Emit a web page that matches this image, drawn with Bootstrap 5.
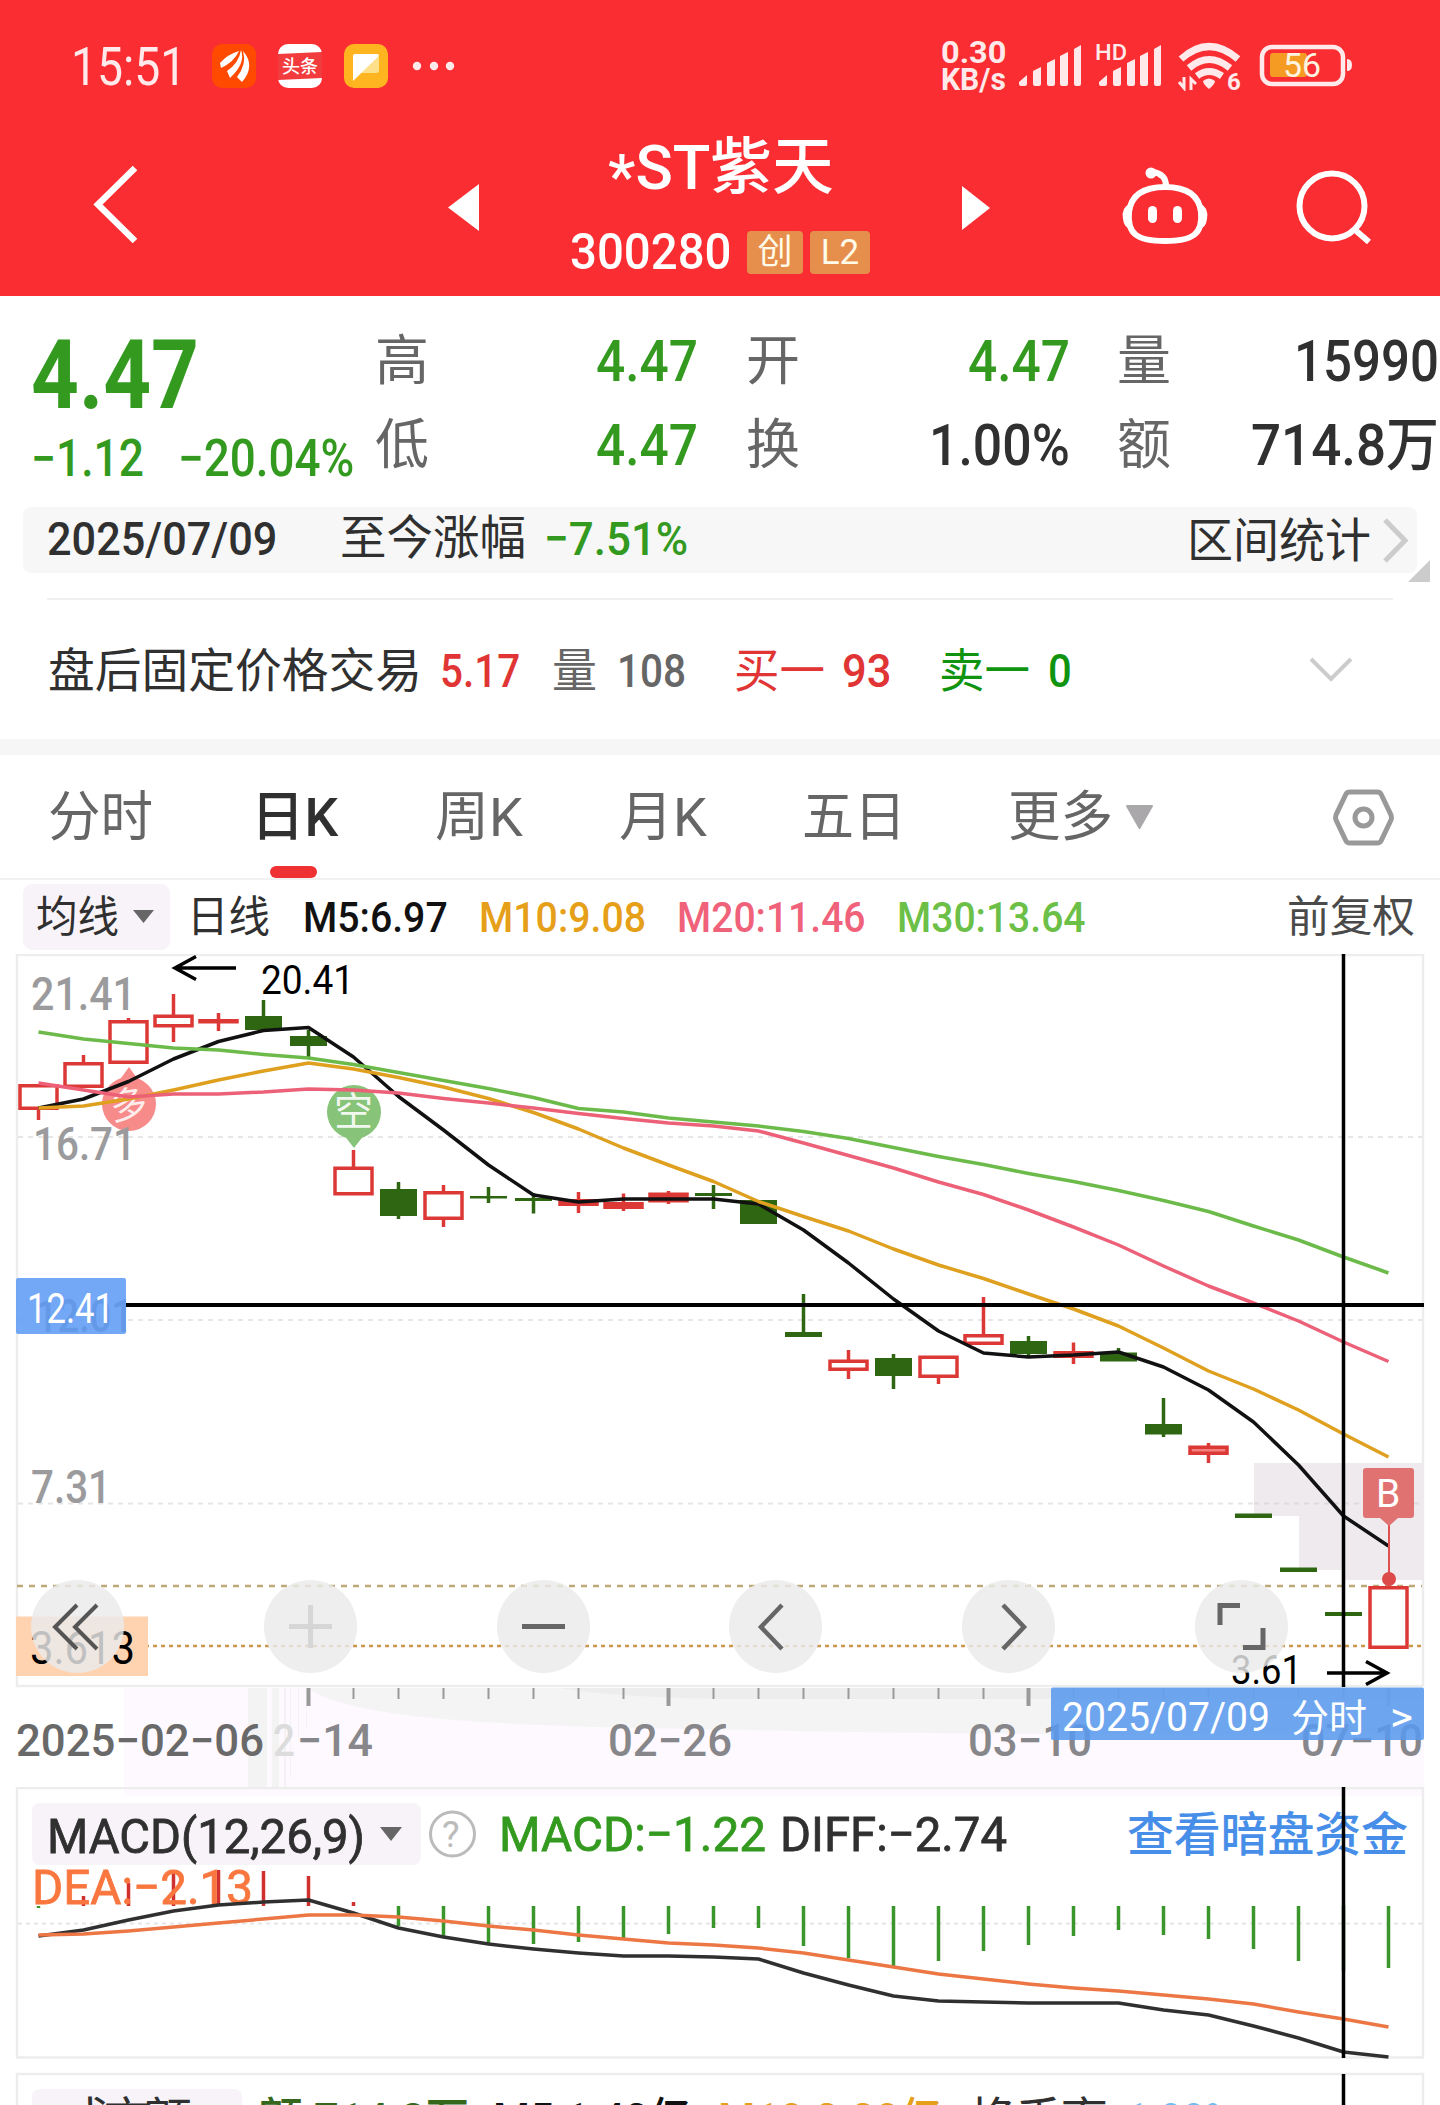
<!DOCTYPE html>
<html lang="zh-CN">
<head>
<meta charset="utf-8">
<meta name="viewport" content="width=device-width, initial-scale=1">
<title>*ST紫天 300280</title>
<link href="https://cdn.jsdelivr.net/npm/bootstrap@5.3.0/dist/css/bootstrap.min.css" rel="stylesheet">
<style>
body{font-family:Roboto,"Noto Sans CJK SC",sans-serif;background:#fff;color:#303030;width:1440px;overflow-x:hidden}
.app{height:2105px;overflow:hidden}
.fit{display:block;flex:none;white-space:nowrap}
.fit>span{display:inline-block;transform-origin:0 50%}
svg{display:block;flex:none}
.up{color:#e03534}.dn{color:#339a1f}.soft{color:#666}
.m5{font-weight:500}
/* header */
.top{height:296px;background:#f92d32;color:#fff}
.status{height:132px;color:#ffe9ea;padding-left:71px}
.clock{width:115px;font-size:54px}
.rate{line-height:27px;font-size:31px;font-weight:700;margin-left:461px}
.rate .fit{width:65px}
.navrow{height:164px}
.ttlbox{width:226px;flex:none}
.ttl{width:226px;height:72px;font-size:62px;line-height:72px}
.star{vertical-align:-9px;font-weight:500}
.codeline{height:88px;margin:4px 0 0 -38px}
.code{width:162px;font-size:50px;font-weight:500}
.tagbox{background:#e68f4c;border-radius:4px;height:43px;width:56px;flex:none;font-size:35px;line-height:43px;text-align:center;color:#fffbe8;margin-left:15px}
.tagbox.l2{width:60px;margin-left:7px}
/* quote */
.quote{height:211px}
.main-q{width:375px;padding:29px 0 0 31px}
.big{width:168px;font-size:96px;line-height:100px;font-weight:700}
.chg{font-size:51px;line-height:67px;font-weight:500}
.chg .a{width:113px}.chg .b{width:176px;margin-left:34px}
.cells{padding-top:23px;line-height:84px;font-size:58px}
.cell1,.cell2{width:323px;margin-right:48px}.cell2{width:324px;margin-right:47px}.cell3{width:322px}
.lab{font-size:54px;line-height:86px;height:84px;width:54px}
.v1{width:102px}.v2{width:141px}.v3{width:145px}.v4{width:188px}
.range{margin:0 23px;height:66px;border-radius:8px;background:#f7f7f7;line-height:63px;font-size:47px;padding-left:24px}
.hr1{margin:25px 47px 0;height:2px;background:#f0f0f0}
.after{height:139px;line-height:141px;padding-left:48px;font-size:47px}
.band{height:16px;background:#f6f6f6}
/* tabs */
.tabs{height:125px;border-bottom:2px solid #f1f1f1;padding-left:48px;font-size:54px;line-height:126px;color:#666}
.tabs .fit{height:123px}
.tabs .on{color:#303030;margin-left:98px}
.tabs .on::after{content:"";display:block;position:absolute;left:19px;bottom:0;width:47px;height:12px;border-radius:6px;background:#ef3133}
.ma{height:74px;padding-left:23px;line-height:67px;font-size:43px}
.pill{background:#f7f3f8;border-radius:9px;color:#303030}
.ctl{left:31px;top:626px;width:1257px}
.ctl .btn{width:93px;height:93px;background:rgba(234,234,234,.82);border:0}
.pane{width:1440px}
</style>
</head>
<body>
<div class="app">
<header class="top">
  <div class="status d-flex align-items-center">
    <span class="fit clock">15:51</span>
    <svg class="ms-4" width="270" height="44" viewBox="0 0 270 44">
      <rect x="2" width="44" height="44" rx="10" fill="#ff4a00"/>
      <path d="M10 19Q18 10 29 7Q24 18 11 24ZM17 27Q29 19 31 6Q36 19 20 34ZM27 33Q37 20 33 7Q46 22 32 38Z" fill="#fff"/>
      <rect x="68" width="44" height="44" rx="10" fill="#fff"/><path d="M68 10l44-2v26l-44 2Z" fill="#f23b3c"/>
      <text x="72" y="29" font-size="18" font-weight="500" fill="#fff" textLength="36">头条</text>
      <rect x="134" width="44" height="44" rx="10" fill="#ffb51f"/><path d="M151 29h15q3 0 3-3V12Z" fill="#ffe08a"/><path d="M143 37V12q0-2 2-2h22q3 0 1 3Z" fill="#fff"/>
      <circle cx="207" cy="22" r="4.2" fill="#ffe9ea"/><circle cx="224" cy="22" r="4.2" fill="#ffe9ea"/><circle cx="240" cy="22" r="4.2" fill="#ffe9ea"/>
    </svg>
    <div class="rate"><span class="fit">0.30</span><span class="fit">KB/s</span></div>
    <svg width="345" height="50" viewBox="1014 42 345 50" class="ms-2" fill="#ffe9ea">
      <path d="M1019 83l8-7v9q0 2-2 2h-4q-2 0-2-2ZM1033 72l8-4v17q0 2-2 2h-4q-2 0-2-2ZM1047 64l8-4v25q0 2-2 2h-4q-2 0-2-2ZM1060 57l8-4v32q0 2-2 2h-4q-2 0-2-2ZM1074 50l7-4v39q0 2-2 2h-3q-2 0-2-2Z"/>
      <path d="M1099 83l8-7v9q0 2-2 2h-4q-2 0-2-2ZM1113 72l8-4v17q0 2-2 2h-4q-2 0-2-2ZM1127 64l8-4v25q0 2-2 2h-4q-2 0-2-2ZM1140 57l8-4v32q0 2-2 2h-4q-2 0-2-2ZM1154 50l7-4v39q0 2-2 2h-3q-2 0-2-2Z"/>
      <text x="1095" y="61" font-size="22" font-weight="500" textLength="32" lengthAdjust="spacingAndGlyphs">HD</text>
      <g fill="none" stroke="#ffe9ea" stroke-width="7"><path d="M1181 60Q1209 35 1238 60"/><path d="M1189 69Q1209 52 1230 69"/><path d="M1197 77Q1209 68 1222 77"/></g>
      <path d="M1203 82q6-5 12 0q0 3-6 8q-6-5-6-8Z"/>
      <path d="M1184 78v11l-5-6M1191 91v-11l5 5" fill="none" stroke="#ffe9ea" stroke-width="3"/>
      <text x="1227" y="91" font-size="24" font-weight="700">6</text>
      <rect x="1262" y="48" width="81" height="37" rx="10" fill="none" stroke="#ffe9ea" stroke-width="4.5"/>
      <path d="M1347 60q5 0 5 6t-5 6Z"/><rect x="1270" y="54" width="37" height="24" rx="3" fill="#f59b23"/>
      <text x="1283" y="78" font-size="33" textLength="38" lengthAdjust="spacingAndGlyphs" fill="#fff4df">56</text>
    </svg>
  </div>
  <div class="navrow d-flex">
    <svg width="608" height="164" viewBox="0 132 608 164"><path d="M135 168L98 204.500L135 241" fill="none" stroke="#fff" stroke-width="6.500"/><path d="M479 184v47l-31-23.500Z" fill="#fff"/></svg>
    <div class="ttlbox">
      <span class="fit ttl m5"><span class="star">*</span>ST紫天</span>
      <div class="codeline d-flex align-items-center"><span class="fit code">300280</span><span class="tagbox">创</span><span class="tagbox l2">L2</span></div>
    </div>
    <svg class="ms-auto" width="540" height="164" viewBox="900 132 540 164">
      <path d="M962 186v44l28-22Z" fill="#fff"/>
      <g fill="none" stroke="#fff" stroke-width="6"><path d="M1165 187C1188 187 1199 196 1201 212C1203 234 1193 241 1165 241S1127 234 1129 212C1131 196 1142 187 1165 187Z"/><path d="M1166 186q0-12-13-14"/><circle cx="1332" cy="206" r="32.500"/><path d="M1354 229l15 13"/></g>
      <circle cx="1151" cy="173" r="5.500" fill="#fff"/><path d="M1130 204q-9 3-7 15q1 9 8 10ZM1200 204q9 3 7 15q-1 9-8 10Z" fill="#fff"/>
      <rect x="1148" y="206" width="9" height="17" rx="4.500" fill="#fff"/><rect x="1173" y="206" width="9" height="17" rx="4.500" fill="#fff"/>
    </svg>
  </div>
</header>

<section class="quote d-flex">
  <div class="main-q flex-shrink-0"><span class="fit big dn">4.47</span><div class="chg dn d-flex"><span class="fit a">−1.12</span><span class="fit b">−20.04%</span></div></div>
  <div class="cells d-flex">
    <div class="cell1"><div class="d-flex justify-content-between"><span class="fit lab soft">高</span><span class="fit v1 dn m5">4.47</span></div><div class="d-flex justify-content-between"><span class="fit lab soft">低</span><span class="fit v1 dn m5">4.47</span></div></div>
    <div class="cell2"><div class="d-flex justify-content-between"><span class="fit lab soft">开</span><span class="fit v1 dn m5">4.47</span></div><div class="d-flex justify-content-between"><span class="fit lab soft">换</span><span class="fit v2 m5">1.00%</span></div></div>
    <div class="cell3"><div class="d-flex justify-content-between"><span class="fit lab soft">量</span><span class="fit v3 m5">15990</span></div><div class="d-flex justify-content-between"><span class="fit lab soft">额</span><span class="fit v4 m5">714.8万</span></div></div>
  </div>
</section>

<section class="range d-flex position-relative">
  <span class="fit m5" style="width:230px">2025/07/09</span><span class="fit" style="width:186px;margin-left:63px;line-height:61px">至今涨幅</span><span class="fit dn m5" style="width:144px;margin-left:18px">−7.51%</span>
  <span class="fit ms-auto" style="width:184px;line-height:68px">区间统计</span>
  <svg width="46" height="66" viewBox="1371 507 46 66"><path d="M1385 520l20 20.500l-20 20.500" fill="none" stroke="#ccc" stroke-width="5"/></svg>
  <svg class="position-absolute" style="right:-13px;bottom:-9px" width="22" height="22"><path d="M22 0v22H0Z" fill="#ccc"/></svg>
</section>
<div class="hr1"></div>
<section class="after d-flex">
  <span class="fit" style="width:374px">盘后固定价格交易</span><span class="fit up m5" style="width:80px;margin-left:18px">5.17</span><span class="fit soft" style="width:45px;margin-left:32px">量</span><span class="fit soft m5" style="width:69px;margin-left:20px">108</span><span class="fit up" style="width:91px;margin-left:48px">买一</span><span class="fit up m5" style="width:49px;margin-left:17px">93</span><span class="fit" style="width:91px;margin-left:48px;color:#109410">卖一</span><span class="fit m5" style="width:24px;margin-left:18px;color:#109410">0</span>
  <svg class="ms-auto" width="134" height="139" viewBox="1306 600 134 139"><path d="M1311 659l20 20l20-20" fill="none" stroke="#ccc" stroke-width="4"/></svg>
</section>
<div class="band"></div>

<nav class="tabs d-flex">
  <span class="fit" style="width:105px">分时</span>
  <span class="on position-relative"><b class="fit m5" style="width:87px">日K</b></span>
  <span class="fit" style="width:88px;margin-left:97px">周K</span>
  <span class="fit" style="width:88px;margin-left:96px">月K</span>
  <span class="fit" style="width:104px;margin-left:95px">五日</span>
  <span class="fit" style="width:105px;margin-left:102px">更多</span>
  <svg width="320" height="123" viewBox="1113 755 320 123"><path d="M1127 806h25l-12.500 22Z" fill="#aaa8ab" stroke="#aaa8ab" stroke-width="2" stroke-linejoin="round"/><path d="M1350 792h27q3 0 4 2l10 21q1 3 0 5l-10 21q-1 2-4 2h-27q-3 0-4-2l-10-21q-1-2 0-5l10-21q1-2 4-2Z" fill="none" stroke="#999" stroke-width="5"/><circle cx="1363.500" cy="817.500" r="8.500" fill="none" stroke="#999" stroke-width="5"/></svg>
</nav>
<div class="ma d-flex align-items-center">
  <div class="pill d-flex" style="width:147px;height:66px;padding-left:13px"><span class="fit" style="width:83px">均线</span><svg width="40" height="66" viewBox="-1 0 40 66"><path d="M13 26h21l-10.500 13Z" fill="#666"/></svg></div>
  <span class="fit" style="width:83px;margin-left:17px">日线</span>
  <span class="fit m5" style="width:145px;margin-left:33px;color:#111">M5:6.97</span>
  <span class="fit m5" style="width:167px;margin-left:31px;color:#e69f18">M10:9.08</span>
  <span class="fit m5" style="width:189px;margin-left:31px;color:#f0627a">M20:11.46</span>
  <span class="fit m5" style="width:189px;margin-left:31px;color:#6cbf47">M30:13.64</span>
  <span class="fit ms-auto" style="width:128px;margin-right:25px;color:#4a4a4a">前复权</span>
</div>

<section class="position-relative">
  <svg class="pane" height="833" viewBox="0 954 1440 833">
    <path d="M124 1688H1424V1787H124Z" fill="#fdf9fe"/>
    <path d="M308 1688H1424V1734H1060C920 1734 800 1731 640 1728C480 1724 350 1718 308 1688Z" fill="#f5f4f5"/>
    <path d="M560 1688H1424V1699H720C660 1698 600 1695 560 1688Z" fill="#eeedee"/>
    <path d="M248 1688h19v99h-19ZM272 1688h7v99h-7ZM284 1688h2v99h-2ZM290 1688h1v90h-1ZM298 1688h1v50h-1ZM306 1688h1v40h-1Z" fill="#f3f3f4"/>
    <path d="M17 1686V955H1423V1686Z" fill="none" stroke="#ededed" stroke-width="2.500"/>
    <path d="M18 1137H1422M18 1320H1422M18 1503.500H1422" stroke="#e6e6e6" stroke-width="2" stroke-dasharray="5 5" fill="none"/>
    <path d="M1254 1463H1424V1580H1344V1570H1299V1516H1254Z" fill="#eeeaee"/>
    <path d="M1254 1503.500H1422" stroke="#dedade" stroke-width="2" stroke-dasharray="5 5"/>
    <path d="M17 1586H1422" stroke="#bda978" stroke-width="2.500" stroke-dasharray="6 6"/>
    <path d="M17 1646H1422" stroke="#c99650" stroke-width="2.500" stroke-dasharray="4 4"/>
    <rect x="16" y="1616.500" width="132" height="59.500" fill="#ffd2b0"/>
    <g id="candles"></g>
    <g fill="#f78b8a"><circle cx="129" cy="1104" r="27"/><path d="M129 1067l-13 18h26Z"/></g>
    <g fill="#87c378"><circle cx="354" cy="1112" r="27"/><path d="M354 1148l-14-18h28Z"/></g>
    <text x="110" y="1118" font-size="37" fill="#fff" fill-opacity=".85" transform="rotate(-8 129 1104)">多</text><text x="334" y="1125" font-size="39" fill="#fff" fill-opacity=".9">空</text>
    <g id="lines" fill="none" stroke-width="3.500" stroke-linejoin="round"></g>
    <g fill="#9b9b9d" font-size="46" font-weight="500">
      <text x="31" y="1010" textLength="105" lengthAdjust="spacingAndGlyphs">21.41</text>
      <text x="33" y="1160" textLength="103" lengthAdjust="spacingAndGlyphs">16.71</text>
      <text x="36" y="1332" textLength="97" lengthAdjust="spacingAndGlyphs">12.01</text>
      <text x="31" y="1503" textLength="80" lengthAdjust="spacingAndGlyphs">7.31</text>
    </g>
    <text x="30" y="1664" font-size="46" textLength="105" lengthAdjust="spacingAndGlyphs">3.613</text>
    <g font-size="40" fill="#000"><text x="261" y="994" textLength="93" lengthAdjust="spacingAndGlyphs">20.41</text><text x="1231" y="1684" textLength="71" lengthAdjust="spacingAndGlyphs">3.61</text></g>
    <path d="M236 968H175M196 956.500L175 968l21 11.500M1327 1673h61M1366 1661.500l21 11.500l-21 11.500" fill="none" stroke="#000" stroke-width="3.500"/>
    <path d="M1389 1520v60" stroke="#e0504f" stroke-width="2"/><circle cx="1389" cy="1579" r="7" fill="#dd4a4a"/>
    <path d="M1366 1468h45q3 0 3 3v44q0 3-3 3h-13l-9 8l-9-8h-14q-3 0-3-3v-44q0-3 3-3Z" fill="#e07371"/><text x="1376" y="1507" font-size="39" fill="#fff" textLength="25">B</text>
    <path d="M126 1305H1424" stroke="#000" stroke-width="4"/><path d="M1343.500 954V1687" stroke="#000" stroke-width="3.500"/>
    <rect x="16" y="1278" width="110" height="56" rx="2" fill="#5a99f5" fill-opacity=".85"/><text x="27" y="1323" font-size="42" fill="#fff" textLength="87" lengthAdjust="spacingAndGlyphs">12.41</text>
    <g id="ticks" stroke="#999"></g>
    <g font-size="45" font-weight="500" fill="#87868a">
      <text x="16" y="1756" fill="#696969" textLength="248" lengthAdjust="spacingAndGlyphs">2025−02−06</text>
      <text x="273" y="1756" fill="#dcdcdc" textLength="22" lengthAdjust="spacingAndGlyphs">2</text><text x="297" y="1756" textLength="76" lengthAdjust="spacingAndGlyphs">−14</text>
      <text x="608" y="1756" textLength="124" lengthAdjust="spacingAndGlyphs">02−26</text><text x="968" y="1756" textLength="124" lengthAdjust="spacingAndGlyphs">03−10</text><text x="1301" y="1756" textLength="122" lengthAdjust="spacingAndGlyphs">07−10</text>
    </g>
    <rect x="1051" y="1687.500" width="373" height="52.500" rx="2" fill="#5a9aee" fill-opacity=".88"/>
    <g fill="#fff" font-size="40"><text x="1062" y="1731" textLength="208" lengthAdjust="spacingAndGlyphs">2025/07/09</text><text x="1291" y="1731" font-size="38" textLength="76">分时</text><text x="1390" y="1731" textLength="23" lengthAdjust="spacingAndGlyphs">&gt;</text></g>
  </svg>
  <div class="ctl position-absolute d-flex justify-content-between">
    <button class="btn rounded-circle p-0"><svg width="93" height="93" fill="none" stroke="#555" stroke-width="4"><path d="M46 25L24 47l22 22M66 25L44 47l22 22"/></svg></button>
    <button class="btn rounded-circle p-0"><svg width="93" height="93" fill="none" stroke="#d6d6d6" stroke-width="5"><path d="M25 46.500h43M46.500 25v43"/></svg></button>
    <button class="btn rounded-circle p-0"><svg width="93" height="93" fill="none" stroke="#666" stroke-width="5"><path d="M25 46.500h43"/></svg></button>
    <button class="btn rounded-circle p-0"><svg width="93" height="93" fill="none" stroke="#666" stroke-width="4.500"><path d="M53 25L32 47l21 22"/></svg></button>
    <button class="btn rounded-circle p-0"><svg width="93" height="93" fill="none" stroke="#666" stroke-width="4.500"><path d="M41 25l21 22l-21 22"/></svg></button>
    <button class="btn rounded-circle p-0"><svg width="93" height="93" fill="none" stroke="#666" stroke-width="5"><path d="M25 45V25.500h20M68 48v19.500H48"/></svg></button>
  </div>
</section>

<section>
  <svg class="pane" height="319" viewBox="0 1787 1440 319">
    <path d="M124 1787H1424V1796H124Z" fill="#fdf9fe"/>
    <path d="M17 1788H1423V2057.500H17ZM17 2110V2074H1423V2110" fill="none" stroke="#ededed" stroke-width="2.500"/>
    <path d="M18 1923.500H1422" stroke="#e6e6e6" stroke-width="2" stroke-dasharray="4 4"/>
    <rect x="32" y="1803" width="389" height="62" rx="8" fill="#f7f3f8"/><rect x="32" y="2089" width="210" height="40" rx="8" fill="#f7f3f8"/>
    <g id="hist" stroke-width="3.500"></g>
    <text x="32" y="1904" font-size="49" stroke="#f9773f" stroke-width=".8" fill="#f9773f" textLength="221" lengthAdjust="spacingAndGlyphs">DEA:−2.13</text>
    <g id="macd" fill="none" stroke-width="3.500" stroke-linejoin="round"></g>
    <g font-size="49" fill="#303030" stroke-width=".8">
      <text x="47" y="1853" stroke="#303030" textLength="318" lengthAdjust="spacingAndGlyphs">MACD(12,26,9)</text>
      <text x="499" y="1851" fill="#339a1f" stroke="#339a1f" textLength="267" lengthAdjust="spacingAndGlyphs">MACD:−1.22</text>
      <text x="780" y="1851" stroke="#303030" textLength="227" lengthAdjust="spacingAndGlyphs">DIFF:−2.74</text>
      <text x="1127" y="1851" font-size="47" font-weight="500" fill="#478ee8" textLength="281">查看暗盘资金</text>
    </g>
    <path d="M380 1827h22l-11 14Z" fill="#666"/><circle cx="452.500" cy="1834" r="22" fill="none" stroke="#bbb" stroke-width="3"/><text x="442" y="1847" font-size="37" fill="#bbb">?</text>
    <g font-size="48" font-weight="500">
      <text x="62" y="2137" fill="#303030" textLength="130" font-weight="400">成交额</text>
      <text x="259" y="2137" fill="#35681c" textLength="210" lengthAdjust="spacingAndGlyphs">额:714.8万</text>
      <text x="493" y="2137" fill="#111" textLength="198" lengthAdjust="spacingAndGlyphs">M5:1.42亿</text>
      <text x="718" y="2137" fill="#e69f18" textLength="224" lengthAdjust="spacingAndGlyphs">M10:2.20亿</text>
      <text x="970" y="2137" fill="#303030" textLength="138" font-weight="400">换手率</text>
      <text x="1126" y="2137" fill="#6fbdf0" textLength="108" lengthAdjust="spacingAndGlyphs">1.00%</text>
    </g>
    <path d="M1343.500 1787V2058M1343.500 2074V2106" stroke="#000" stroke-width="3.500"/>
  </svg>
</section>
</div>
<script>
const X = i => 38.5 + 45 * i;
// r: hollow rise, f: filled rise, p: pale rise, g: fall; then body top, body bottom, wick high, wick low
const C = [['r',1084,1110,1084,1120],['r',1062,1088,1055,1088],['r',1020,1064,1018,1064],['r',1014.5,1027.5,994,1042],['f',1019,1023.5,1013,1031],['g',1016,1030,1000,1030],['g',1036,1046,1030,1057],['r',1166.5,1195.5,1150,1195],['g',1189,1216,1182,1219],['r',1191,1220,1185,1227],['g',1196,1198.5,1187,1203],['g',1198,1201,1193,1213.5],['f',1199,1206,1192,1213],['f',1202,1209,1193.5,1211],['f',1192.5,1202.5,1191,1204],['g',1193,1196,1185,1209],['g',1200,1224,1200,1224],['g',1332,1337,1294,1337],['r',1359.5,1371,1350,1379],['g',1358,1376,1354,1389],['r',1355.5,1378,1356,1384],['r',1334,1345,1297,1345],['g',1341,1354,1336,1356.5],['f',1351,1358,1342.5,1364],['g',1352.5,1361.5,1348,1361],['g',1424,1434.5,1398,1437],['p',1445.5,1455,1443,1463],['g',1513.5,1518,1514,1518],['g',1567.5,1572,1568,1572],['g',1612,1616,1612,1616],['r',1586,1649,1586,1649]];
document.getElementById('candles').innerHTML = C.map(([k,t,b,h,l],i) => {
  const x = X(i), col = k === 'g' ? '#2f6611' : '#dc3836', fill = {r:'#fff',p:'#f3807d'}[k] || col;
  let s = `<path d="M${x} ${h}V${l}" stroke="${col}" stroke-width="3.5"/>`;
  if (k === 'g') s += `<rect x="${x-18.5}" y="${t}" width="37" height="${b-t}" fill="${col}"/>`;
  else s += `<rect x="${x-18.5}" y="${t+1.75}" width="37" height="${Math.max(1,b-t-3.5)}" fill="${fill}" stroke="${col}" stroke-width="3.5"/>`;
  return s;
}).join('');
const line = (a,c) => `<polyline stroke="${c}" points="${a.map((y,i)=>X(i)+','+y).join(' ')}"/>`;
document.getElementById('lines').innerHTML =
 line([1108,1099,1081.5,1059,1041.5,1030.5,1027.5,1057,1096.5,1130,1165,1195,1202,1199,1199,1199,1204,1230,1263,1299,1331,1353,1357,1355,1352,1367,1390,1422,1465,1516,1546],'#111')+
 line([1108,1106,1099,1090,1080,1071,1063,1069,1077.5,1087,1098.5,1112.5,1129,1148,1165,1181.5,1201.5,1216.5,1231,1249,1265,1278.5,1294,1309,1326,1348,1371,1389,1410,1434,1457],'#dfa01f')+
 line([1083,1090,1097,1094,1094,1092,1089,1090,1093,1098.5,1103,1108,1113.5,1118.5,1123,1126,1131,1143,1155.5,1168,1182,1194.5,1210,1227,1245,1266,1286,1303,1321,1342,1361.5],'#ec6177')+
 line([1032,1039,1043.5,1048,1050,1054.5,1058,1064.5,1072.5,1080.5,1088.5,1097.5,1108.5,1112,1118,1122,1126,1131.5,1138.5,1147.5,1156.5,1164.5,1173.5,1181.5,1190.5,1200.5,1211.5,1226,1240,1257,1273],'#6cbb4a');
document.getElementById('ticks').innerHTML = Array.from({length:25},(_,n)=>n+6).map(i =>
 `<path d="M${X(i)} 1688V${(i-6)%8 ? 1699 : 1706}" stroke-width="${(i-6)%8 ? 2 : 4}" opacity="${i>22?.45:1}"/>`).join('');
const H = [1908,1896,1883,1873,1870,1871,1876,1902,1926,1937,1943,1944,1942,1938,1934,1928,1928,1946,1958,1966,1961,1951,1945,1936,1930,1935,1939,1949,1961,1971,1968];
document.getElementById('hist').innerHTML = H.map((y,i)=>`<path d="M${X(i)} 1906V${y}" stroke="${y<1906?'#d0312f':'#3a962a'}"/>`).join('');
document.getElementById('macd').innerHTML =
 line([1936,1930,1920,1911,1905,1902,1900,1913,1928,1937,1944,1949,1953,1956,1956,1957,1959,1973,1985,1996,2001,2002,2003,2003,2003,2010,2015,2026,2038,2052,2057],'#303030')+
 line([1935,1934,1931,1927,1923,1919,1915,1915,1917,1921,1926,1930,1935,1939,1943,1945,1948,1953,1960,1967,1974,1979,1984,1988,1991,1995,1999,2004,2012,2019,2027],'#ec7744');
// squeeze each label to the width of its box
document.querySelectorAll('.fit').forEach(e => {
  const s = document.createElement('span'); s.append(...e.childNodes); e.append(s);
  s.style.transform = `scaleX(${e.clientWidth / s.offsetWidth})`;
});
</script>
<script src="https://cdn.jsdelivr.net/npm/bootstrap@5.3.0/dist/js/bootstrap.bundle.min.js"></script>
</body>
</html>
